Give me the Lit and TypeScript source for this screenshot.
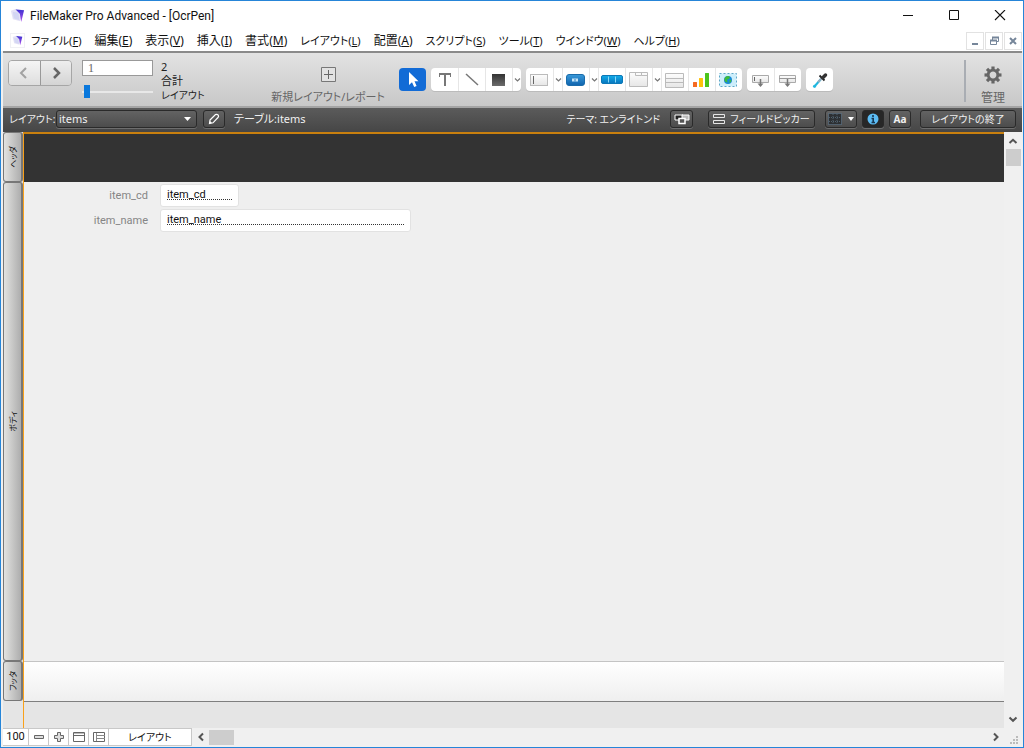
import { LitElement, html, css, svg } from "lit";
import { customElement, property } from "lit/decorators.js";

const menus: [string, string, string][] = [
  ["ファイル", "F", "kana"], ["編集", "E", "kanji"], ["表示", "V", "kanji"], ["挿入", "I", "kanji"], ["書式", "M", "kanji"],
  ["レイアウト", "L", "kana"], ["配置", "A", "kanji"], ["スクリプト", "S", "kana"], ["ツール", "T", "kana"],
  ["ウインドウ", "W", "kana"], ["ヘルプ", "H", "kana"],
];

const shared = css`
  :host, * { box-sizing: border-box; }
  button, input, select {
    font: inherit;
    font-feature-settings: inherit;
    color: inherit;
    margin: 0;
    padding: 0;
    border: 0;
    background: none;
    border-radius: 0;
    appearance: none;
    outline: none;
  }
  button { display: flex; align-items: center; justify-content: center; white-space: nowrap; }
  svg { display: block; flex: none; }
`;

const logo = (size: number) => html`<svg width=${size} height=${size} viewBox="0 0 16 16" aria-hidden="true">
  <defs><linearGradient id="fold" x1="0" y1="0" x2="0" y2="1"><stop offset="0" stop-color="#3b2fd0"/><stop offset="1" stop-color="#b455ee"/></linearGradient></defs>
  <path d="M1 3 L6 1 L14 2 L11 14 L3 12 Z" fill="#e4e2f6"/>
  <path d="M3 4 L9 5 L10 13 L4 11 Z" fill="#d3d6f3"/>
  <path d="M6 1.500 L15 2.500 L12 15 L10.500 6 Z" fill="url(#fold)"/>
</svg>`;

@customElement("title-bar")
export class TitleBar extends LitElement {
  static styles = [shared, css`
    :host { display: flex; align-items: center; height: 29px; background: #fff; padding-left: 9px; }
    .name { flex: 1; margin-left: 5px; font-family: Roboto, "Noto Sans CJK JP", sans-serif; font-size: 12px; color: #111; }
    .win { width: 46px; height: 29px; }
  `];
  render() {
    return html`${logo(15)}
      <span class="name">FileMaker Pro Advanced - [OcrPen]</span>
      <button class="win" aria-label="Minimize"><svg width="12" height="12"><path d="M1 5.500H11" stroke="#111"/></svg></button>
      <button class="win" aria-label="Maximize"><svg width="12" height="12"><path d="M1.500.5H10.500V9.500H1.500Z" fill="none" stroke="#111"/></svg></button>
      <button class="win" aria-label="Close"><svg width="12" height="12"><path d="M1 0L11 10M11 0L1 10" stroke="#111" stroke-width="1.100"/></svg></button>`;
  }
}

@customElement("menu-bar")
export class MenuBar extends LitElement {
  static styles = [shared, css`
    :host { display: flex; align-items: center; height: 21px; background: #fff; padding: 0 1px 0 9px; font-size: 11px; }
    nav { display: flex; flex: 1; gap: 13px; margin-left: 6px; }
    .kanji { font-size: 12px; }
    .doc { display: flex; padding: 1px; border: 1px solid #f0f0f4; }
    .child { width: 18px; height: 18px; border: 1px solid #e2e2e2; margin-left: 1px; }
  `];
  render() {
    return html`<span class="doc">${logo(11)}</span>
      <nav>${menus.map(([t, k, script]) => html`<button class=${script}>${t}(<u>${k}</u>)</button>`)}</nav>
      <button class="child" aria-label="Minimize document"><svg width="10" height="10"><path d="M2 8H8" stroke="#76869a" stroke-width="2"/></svg></button>
      <button class="child" aria-label="Restore document"><svg width="10" height="10"><path d="M3.500 4V1.500H9.500V5.500H7M1.500 4.500H7.500V8.500H1.500Z" fill="none" stroke="#76869a"/><path d="M3 1.500H10M1 4.500H8" stroke="#76869a" stroke-width="2"/></svg></button>
      <button class="child" aria-label="Close document"><svg width="10" height="10"><path d="M2 2L8 8M8 2L2 8" stroke="#76869a" stroke-width="2"/></svg></button>`;
  }
}

const chev = html`<svg width="9" height="8" viewBox="0 0 9 8"><path d="M2 2.500L4.500 5L7 2.500" fill="none" stroke="#777" stroke-width="1.200"/></svg>`;
const icon = (body: unknown) => html`<svg width="22" height="20" viewBox="0 0 22 20">
  <defs>
    <linearGradient id="blue" x1="0" y1="0" x2="0" y2="1"><stop offset="0" stop-color="#3a9ada"/><stop offset="1" stop-color="#0f63ad"/></linearGradient>
    <linearGradient id="cyan" x1="0" y1="0" x2="0" y2="1"><stop offset="0" stop-color="#12aeea"/><stop offset="1" stop-color="#0874bd"/></linearGradient>
    <linearGradient id="dark" x1="0" y1="0" x2="0" y2="1"><stop offset="0" stop-color="#333"/><stop offset="1" stop-color="#6c6c6c"/></linearGradient>
    <linearGradient id="pale" x1="0" y1="0" x2="0" y2="1"><stop offset="0" stop-color="#fdfdfd"/><stop offset="1" stop-color="#e6e6e6"/></linearGradient>
  </defs>${body}</svg>`;

const pics: Record<string, unknown> = {
  cursor: svg`<path d="M7 2V15L10 12.200L12.200 17L14.600 16L12.500 11.300H16.500Z" fill="#fff"/>`,
  text: svg`<path d="M5.500 7V4M16.500 7V4" stroke="#777"/><path d="M5 4H17M11 4V16" fill="none" stroke="#777" stroke-width="2"/>`,
  line: svg`<path d="M5 4L17 15" stroke="#777" stroke-width="1.500"/>`,
  rect: svg`<rect x="4" y="4" width="13" height="12" fill="url(#dark)"/>`,
  field: svg`<rect x="1.500" y="4.500" width="17" height="11" fill="url(#pale)" stroke="#bbb"/><path d="M4.500 6V14" stroke="#666"/>`,
  button: svg`<rect x="1.500" y="4.500" width="18" height="11" rx="2.500" fill="url(#blue)" stroke="#1a6cab"/><rect x="7" y="8.500" width="6" height="3" fill="#c7e5f8"/><path d="M10 9V11.500" stroke="#2a7fc0"/>`,
  buttons: svg`<rect x=".5" y="5.500" width="21" height="8" rx="1.500" fill="url(#cyan)" stroke="#0c78b7"/><path d="M7.500 6.500V12.500M14.500 6.500V12.500" stroke="#8ad8f8"/>`,
  tabs: svg`<path d="M1.500 2.500H19.500V16.500H1.500Z" fill="url(#pale)" stroke="#bbb"/><path d="M7.500 2.500V5.500H13.500V2.500M13.500 5.500H19.500" fill="none" stroke="#bbb"/>`,
  portal: svg`<path d="M1.500 3.500H19.500V17.500H1.500Z" fill="url(#pale)" stroke="#bbb"/><path d="M1 8.500H19M1 12.500H19" stroke="#bbb"/>`,
  chart: svg`<rect x="2" y="12" width="4" height="5" rx=".5" fill="#f56a22"/><rect x="8" y="8" width="4" height="9" rx=".5" fill="#ffc20b"/><rect x="14" y="3" width="4" height="14" rx=".5" fill="#4cc41c"/>`,
  web: svg`<rect x="1.500" y="3.500" width="17" height="13" fill="#cdeefb" stroke="#5fa9c8" stroke-dasharray="2 2"/><circle cx="10" cy="10" r="4" fill="#198ad8"/><path d="M7 7.500Q10 5 12 7L11 9L9 9.500L9.500 12.500Q6 12 6.500 9ZM11.500 10.500L13.500 9.500Q13.500 12.500 11.500 13Z" fill="#3ebc3c"/>`,
  dropField: svg`<path d="M2.500 5.500H18.500V12.500H2.500Z" fill="url(#pale)" stroke="#aaa"/><path d="M4.500 7V11" stroke="#666"/><path d="M10.500 9V15" stroke="#777" stroke-width="1.500"/><path d="M7.500 13.500H13.500L10.500 17Z" fill="#777"/>`,
  dropPart: svg`<path d="M2.500 5.500H18.500V12.500H2.500Z" fill="url(#pale)" stroke="#aaa"/><path d="M2 8.500H19" stroke="#999"/><path d="M10.500 9V15" stroke="#777" stroke-width="1.500"/><path d="M7.500 13.500H13.500L10.500 17Z" fill="#777"/>`,
  dropper: svg`<path d="M5 17L12 9" stroke="#21b7df" stroke-width="2"/><circle cx="5.500" cy="16.300" r="1.500" fill="#21b7df"/><path d="M9 12L13 8" stroke="#9ab" stroke-width="2"/><path d="M10.500 5.500L15.500 10.500" stroke="#222" stroke-width="1.800"/><path d="M14 7.500L16.500 5" stroke="#333" stroke-width="3.500" stroke-linecap="round"/>`,
};

@customElement("tool-bar")
export class ToolBar extends LitElement {
  static styles = [shared, css`
    :host {
      display: flex; height: 57px; padding: 7px 10px 0 5px; color: #222;
      background: linear-gradient(#e2e2e2, #c8c8c8);
      border-top: 2px solid #8a8a8a; border-bottom: 2px solid #a4a4a4;
    }
    .nav { display: flex; width: 64px; height: 26px; border: 1px solid #a6a6a6; border-radius: 4px; overflow: hidden; }
    .nav button { flex: 1; background: linear-gradient(#f5f5f5, #dedede); }
    .nav button + button { border-left: 1px solid #999; background: linear-gradient(#eee, #d4d4d4); }
    .record { display: flex; flex-direction: column; gap: 8px; width: 71px; margin-left: 10px; }
    .number { width: 71px; height: 16px; background: #fff; border: 1px solid #999; padding-left: 5px; font-family: "Liberation Serif", serif; font-size: 12px; color: #666; }
    .slide { width: 71px; height: 14px; background: linear-gradient(#e8e8e8, #e8e8e8) 0 7px / 100% 2px no-repeat; }
    .slide::-webkit-slider-thumb { appearance: none; width: 6px; height: 13px; margin-left: 2px; background: #0a78dc; }
    .count { display: flex; flex-direction: column; gap: 2px; width: 60px; margin-left: 8px; font-size: 11px; line-height: 12px; padding-top: 1px; }
    .count .mode { font-size: 10px; }
    .create { display: flex; flex-direction: column; align-items: center; justify-content: flex-start; gap: 7px; width: 112px; margin-left: 51px; padding-top: 7px; color: #666; font-size: 11px; line-height: 16px; }
    .tools { display: flex; gap: 5px; margin-left: 15px; padding-top: 8px; }
    .group { display: flex; height: 23px; background: #fff; border-radius: 4px; overflow: hidden; box-shadow: 0 1px 0 #bbb; }
    .group button { width: 27px; }
    .group button + button { border-left: 1px solid #e6e6e6; }
    .group .more { width: 9px; }
    .group.on { background: #126bd6; box-shadow: none; }
    .manage { display: flex; flex-direction: column; justify-content: flex-start; gap: 6px; margin-left: auto; width: 48px; height: 42px; padding: 6px 0 0 8px; border-left: 2px solid #a9adb3; color: #666; line-height: 16px; }
  `];
  private tool(name: string) {
    return name === "more"
      ? html`<button class="more" aria-label="More">${chev}</button>`
      : html`<button aria-label=${name}>${icon(pics[name])}</button>`;
  }
  render() {
    const groups = [
      ["text", "line", "rect", "more"],
      ["field", "more", "button", "more", "buttons", "tabs", "more", "portal", "chart", "web"],
      ["dropField", "dropPart"],
      ["dropper"],
    ];
    return html`
      <div class="nav">
        <button aria-label="Previous"><svg width="14" height="14"><path d="M9 2L4 7L9 12" fill="none" stroke="#a2a2a2" stroke-width="2"/></svg></button>
        <button aria-label="Next"><svg width="14" height="14"><path d="M5 2L10 7L5 12" fill="none" stroke="#666" stroke-width="2.500"/></svg></button>
      </div>
      <div class="record">
        <input class="number" aria-label="Layout number" .value=${"1"}>
        <input class="slide" type="range" min="1" max="2" .value=${"1"} aria-label="Layout">
      </div>
      <div class="count"><div>2</div><div>合計</div><div class="mode">レイアウト</div></div>
      <button class="create"><svg width="15" height="15"><path d="M.5.5H14.500V14.500H.5Z" fill="#e2e2e2" stroke="#777"/><path d="M7.500 3V12M3 7.500H12" stroke="#666"/></svg>新規レイアウト/レポート</button>
      <div class="tools">
        <div class="group on">${this.tool("cursor")}</div>
        ${groups.map((g) => html`<div class="group">${g.map((n) => this.tool(n))}</div>`)}
      </div>
      <button class="manage"><svg width="18" height="18" viewBox="-9 -9 18 18"><circle r="4.800" fill="none" stroke="#666" stroke-width="2.800"/>${[0, 45, 90, 135, 180, 225, 270, 315].map((a) => svg`<rect x="-1.600" y="-8.500" width="3.200" height="3.500" fill="#666" transform="rotate(${a})"/>`)}</svg>管理</button>`;
  }
}

@customElement("layout-bar")
export class LayoutBar extends LitElement {
  static styles = [shared, css`
    :host { display: flex; align-items: center; height: 24px; padding: 0 6px 2px 6px; color: #f0f0f0; background: linear-gradient(#5b5b5b, #464646); font-size: 10px; }
    .box { height: 18px; border: 1px solid #2a2a2a; border-radius: 3px; background: linear-gradient(#636363, #4c4c4c); box-shadow: 0 1px 0 #6d6d6d; }
    label { width: 47px; white-space: nowrap; }
    .pick { position: relative; width: 141px; font-family: "Noto Sans", sans-serif; font-size: 11px; }
    .pick select { display: block; width: 100%; height: 16px; padding-left: 2px; line-height: 16px; }
    .pick svg { position: absolute; right: 4px; top: 6px; pointer-events: none; }
    .edit { width: 22px; margin-left: 6px; }
    .table { flex: 1; margin-left: 9px; font-size: 11px; }
    .theme { width: 23px; margin-left: 10px; }
    .picker { gap: 5px; width: 107px; margin-left: 15px; }
    .grid { width: 32px; margin-left: 10px; gap: 3px; }
    .info { width: 22px; margin-left: 5px; background: #272727; }
    .font { width: 22px; margin-left: 5px; font-family: "Noto Sans", sans-serif; font-weight: 700; }
    .exit { width: 96px; margin-left: 9px; }
  `];
  render() {
    return html`<label for="layout">レイアウト:</label>
      <div class="box pick"><select id="layout"><option>items</option></select><svg width="8" height="5"><path d="M0 0H7L3.500 4Z" fill="#fff"/></svg></div>
      <button class="box edit" aria-label="Edit layout"><svg width="12" height="12"><path d="M2 7L7.500 1.500Q9 .8 10.300 2.200Q11 3.500 10 4.500L5 9.800L1.500 10.500Z" fill="none" stroke="#fff" stroke-width="1.200"/><path d="M1.500 10.500L2 8L4 10Z" fill="#fff"/></svg></button>
      <span class="table">テーブル:items</span>
      <span>テーマ: エンライトンド</span>
      <button class="box theme" aria-label="Change theme"><svg width="16" height="12"><path d="M1 2H9V7H1Z" fill="#222" stroke="#fff"/><path d="M8 2H15V7H8Z" fill="#bbb" stroke="#fff"/><path d="M5 5.500H11V10.500H5Z" fill="#555" stroke="#fff" stroke-width="1.500"/></svg></button>
      <button class="box picker"><svg width="12" height="10"><path d="M.5.5H11.500V3.500H.5ZM.5 6.500H11.500V9.500H.5Z" fill="none" stroke="#e6e6e6"/></svg>フィールドピッカー</button>
      <button class="box grid" aria-label="Grid"><svg width="17" height="12"><path d="M.5.5H13.500V11.500H.5Z" fill="#2d3033" stroke="#64819a" stroke-dasharray="1 1"/><path d="M1 4.500H13M1 8.500H13M5 1V11M9 1V11" stroke="#50616e" stroke-dasharray="1 1"/></svg><svg width="7" height="5"><path d="M0 0H6L3 4Z" fill="#fff"/></svg></button>
      <button class="box info" aria-label="Inspector"><svg width="12" height="12"><circle cx="6" cy="6" r="5.500" fill="#5cbcf4"/><path d="M6 2V4M4.500 5.500H6.200V9.500M4.500 9.500H8" fill="none" stroke="#173752" stroke-width="1.600"/></svg></button>
      <button class="box font">Aa</button>
      <button class="box exit">レイアウトの終了</button>`;
  }
}

@customElement("layout-field")
export class LayoutField extends LitElement {
  @property() name = "";
  @property({ type: Boolean }) wide = false;
  static styles = [shared, css`
    :host { display: flex; align-items: center; gap: 12px; height: 25px; font-family: Roboto, sans-serif; font-size: 11px; }
    label { width: 124px; text-align: right; color: #858585; }
    .frame { width: 79px; height: 23px; padding: 2px 6px; background: #fff; border: 1px solid #e2e2e2; border-radius: 3px; }
    .frame.wide { width: 251px; }
    input { display: block; width: 100%; height: 15px; line-height: 15px; color: #111;
      background: repeating-linear-gradient(90deg, #333 0 1px, transparent 1px 2px) 0 12px / 100% 1px no-repeat; }
  `];
  render() {
    return html`<label for="f">${this.name}</label>
      <div class="frame ${this.wide ? "wide" : ""}"><input id="f" readonly .value=${this.name}></div>`;
  }
}

@customElement("layout-canvas")
export class LayoutCanvas extends LitElement {
  static styles = [shared, css`
    :host { display: flex; background: #e5e5e5; min-height: 0; }
    .rail { display: flex; flex-direction: column; width: 20px; }
    .tab { width: 20px; border: 1px solid #777; border-right: 2px solid #777; border-radius: 3px; background: linear-gradient(90deg, #e2e2e0, #adadad); color: #111; font-size: 8px; line-height: 12px; }
    .tab span { writing-mode: vertical-rl; text-orientation: sideways; transform: rotate(180deg); }
    .head { height: 50px; }
    .body { flex: 1; }
    .foot { height: 40px; }
    .rest { height: 27px; }
    .page { flex: 1; display: flex; flex-direction: column; border-left: 1px solid #f9a11b; border-top: 2px solid #c9800f; }
    .page .head { height: 48px; background: #333; }
    .page .body { background: #efefef; padding-top: 1px; }
    .page .foot { background: linear-gradient(#fff, #efefef); border-top: 1px solid #c4c4c4; border-bottom: 1px solid #7f7f7f; height: 41px; }
    .page .rest { height: 26px; }
    .scroll { display: flex; flex-direction: column; align-items: center; width: 18px; padding: 3px 0 2px; background: #f0f0f0; }
    .scroll .thumb { width: 15px; height: 17px; margin-top: 1px; background: #cdcdcd; }
    .scroll button { width: 17px; height: 13px; }
    .scroll .down { margin-top: auto; }
  `];
  render() {
    return html`
      <div class="rail">
        <button class="tab head"><span>ヘッダ</span></button>
        <button class="tab body"><span>ボディ</span></button>
        <button class="tab foot"><span>フッタ</span></button>
        <div class="rest"></div>
      </div>
      <div class="page">
        <div class="head"></div>
        <div class="body">
          <layout-field name="item_cd"></layout-field>
          <layout-field name="item_name" wide></layout-field>
        </div>
        <div class="foot"></div>
        <div class="rest"></div>
      </div>
      <div class="scroll">
        <button aria-label="Scroll up"><svg width="10" height="7"><path d="M1.500 5L5 1.800L8.500 5" fill="none" stroke="#555" stroke-width="2"/></svg></button>
        <div class="thumb"></div>
        <button class="down" aria-label="Scroll down"><svg width="10" height="7"><path d="M1.500 1.500L5 4.800L8.500 1.500" fill="none" stroke="#555" stroke-width="2"/></svg></button>
      </div>`;
  }
}

@customElement("status-bar")
export class StatusBar extends LitElement {
  static styles = [shared, css`
    :host { display: flex; align-items: center; height: 18px; background: #f0f0f0; }
    .cell { width: 20px; height: 18px; background: #fff; border: 1px solid #c8c8c8; border-left: 0; color: #111; }
    .zoom { width: 26px; font-family: Roboto, sans-serif; font-size: 11px; }
    .mode { width: 83px; font-size: 10px; }
    .left { width: 17px; height: 16px; }
    .thumb { width: 25px; height: 15px; background: #cdcdcd; }
    .right { width: 17px; height: 16px; margin-left: auto; }
    .grip { margin: 6px 3px 0 6px; }
  `];
  render() {
    return html`
      <button class="cell zoom">100</button>
      <button class="cell" aria-label="Zoom out"><svg width="12" height="12"><path d="M1.500 4.500H10.500V7.500H1.500Z" fill="#ddd" stroke="#666"/></svg></button>
      <button class="cell" aria-label="Zoom in"><svg width="12" height="12"><path d="M4.500 1.500H7.500V4.500H10.500V7.500H7.500V10.500H4.500V7.500H1.500V4.500H4.500Z" fill="#ddd" stroke="#666"/></svg></button>
      <button class="cell" aria-label="Status toolbar"><svg width="14" height="12"><path d="M1.500 1.500H12.500V10.500H1.500Z" fill="#fff" stroke="#666"/><path d="M2 2.500H12" stroke="#bbb"/><path d="M1 4.500H13" stroke="#666"/></svg></button>
      <button class="cell" aria-label="Part labels"><svg width="14" height="12"><path d="M1.500 1.500H12.500V10.500H1.500Z" fill="#fff" stroke="#666"/><path d="M4.500 2V10M5 4.500H13M5 7.500H13" stroke="#888"/></svg></button>
      <button class="cell mode">レイアウト</button>
      <button class="left" aria-label="Scroll left"><svg width="8" height="10"><path d="M6 1.500L2.500 5L6 8.500" fill="none" stroke="#555" stroke-width="2"/></svg></button>
      <div class="thumb"></div>
      <button class="right" aria-label="Scroll right"><svg width="8" height="10"><path d="M2 1.500L5.500 5L2 8.500" fill="none" stroke="#555" stroke-width="2"/></svg></button>
      <svg class="grip" width="9" height="9"><path d="M6 0H8V2H6ZM3 3H5V5H3ZM6 3H8V5H6ZM0 6H2V8H0ZM3 6H5V8H3ZM6 6H8V8H6Z" fill="#bbb"/></svg>`;
  }
}

@customElement("app-root")
export class AppRoot extends LitElement {
  static styles = css`
    :host {
      box-sizing: border-box; display: flex; flex-direction: column; height: 100vh;
      border: 1px solid #2685d8; background: #f0f0f0; color: #111;
      font: 12px/16px "Noto Sans", "Noto Sans CJK JP", sans-serif;
      font-feature-settings: "palt";
    }
    .inner { flex: 1; display: flex; flex-direction: column; min-height: 0; padding: 0 1px 1px 2px; }
    layout-canvas { flex: 1; }
  `;
  render() {
    return html`<title-bar></title-bar><menu-bar></menu-bar>
      <div class="inner">
        <tool-bar></tool-bar><layout-bar></layout-bar><layout-canvas></layout-canvas><status-bar></status-bar>
      </div>`;
  }
}
